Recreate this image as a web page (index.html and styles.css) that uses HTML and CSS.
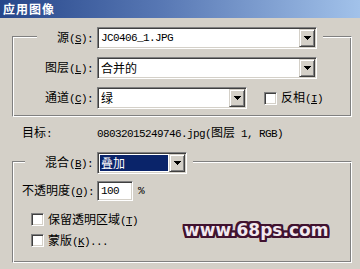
FILE: index.html
```html
<!DOCTYPE html>
<html lang="zh-CN">
<head>
<meta charset="utf-8">
<title>应用图像</title>
<link rel="stylesheet" href="styles.css">
</head>
<body>
<div class="title">应用图像</div>

<div class="group g1">
  <div class="row legend l1">
    <label class="lbl">源<span class="a">(<u>S</u>):</span></label>
    <div class="combo w220"><span class="val a">JC0406_1.JPG</span><span class="btn"><svg width="7" height="4" viewBox="0 0 7 4" shape-rendering="crispEdges"><path d="M0 0h7v1H0zM1 1h5v1H1zM2 2h3v1H2zM3 3h1v1H3z"/></svg></span></div>
  </div>
  <div class="row inrow">
    <label class="lbl">图层<span class="a">(<u>L</u>):</span></label>
    <div class="combo w220"><span class="val">合并的</span><span class="btn"><svg width="7" height="4" viewBox="0 0 7 4" shape-rendering="crispEdges"><path d="M0 0h7v1H0zM1 1h5v1H1zM2 2h3v1H2zM3 3h1v1H3z"/></svg></span></div>
  </div>
  <div class="row inrow">
    <label class="lbl">通道<span class="a">(<u>C</u>):</span></label>
    <div class="combo w150"><span class="val">绿</span><span class="btn"><svg width="7" height="4" viewBox="0 0 7 4" shape-rendering="crispEdges"><path d="M0 0h7v1H0zM1 1h5v1H1zM2 2h3v1H2zM3 3h1v1H3z"/></svg></span></div>
    <span class="check invert-check"></span>
    <span class="chk-label">反相<span class="a">(<u>I</u>)</span></span>
  </div>
</div>

<div class="target">
  <span class="tlbl">目标<span class="a">:</span></span>
  <span><span class="a">08032015249746.jpg(</span>图层<span class="a"> 1, RGB)</span></span>
</div>

<div class="group g2">
  <div class="row legend l2">
    <label class="lbl">混合<span class="a">(<u>B</u>):</span></label>
    <div class="combo w90"><span class="val sel">叠加</span><span class="btn"><svg width="7" height="4" viewBox="0 0 7 4" shape-rendering="crispEdges"><path d="M0 0h7v1H0zM1 1h5v1H1zM2 2h3v1H2zM3 3h1v1H3z"/></svg></span></div>
  </div>
  <div class="row opacity">
    <label class="lbl">不透明度<span class="a">(<u>O</u>):</span></label>
    <div class="input a">100</div>
    <span class="pct a">%</span>
  </div>
  <div class="row chk-row first">
    <span class="check"></span>
    <span class="chk-label">保留透明区域<span class="a">(<u>T</u>)</span></span>
  </div>
  <div class="row chk-row">
    <span class="check"></span>
    <span class="chk-label">蒙版<span class="a">(<u>K</u>)...</span></span>
  </div>
</div>

<div class="wm">www.68ps.com</div>
</body>
</html>
```

FILE: styles.css
```css
* { box-sizing: border-box; }
html, body { margin: 0; padding: 0; }
body {
  width: 360px;
  height: 269px;
  overflow: hidden;
  position: relative;
  background: #d4d0c8;
  color: #000;
  font-family: "Noto Sans CJK SC", sans-serif;
  font-size: 12px;
  line-height: 16px;
}
.a {
  font-family: "Liberation Mono", monospace;
  font-size: 11px;
  letter-spacing: -0.6px;
}
u { text-underline-offset: 1px; }

.title {
  height: 18px;
  line-height: 18px;
  padding-left: 3px;
  color: #fff;
  font-weight: bold;
  letter-spacing: 1px;
  background: linear-gradient(90deg, #26468a 0%, #5878b4 45%, #a2c2ea 100%);
}

.group {
  margin-left: 12px;
  width: 340px;
  border: 1px solid;
  border-color: #808080 #fff #fff #808080;
  box-shadow: inset 1px 1px #fff, inset -1px -1px #808080;
}
.g1 { margin-top: 18px; height: 81px; }
.g2 { margin-top: 20px; height: 102px; }

.row { display: flex; align-items: center; }
.legend { background: #d4d0c8; margin-top: -10px; height: 22px; }
.l1 { margin-left: 24px; width: 286px; }
.inrow { margin-left: 24px; margin-top: 8px; }
.lbl { flex: none; width: 56px; margin-right: 4px; text-align: right; white-space: nowrap; }

.combo {
  flex: none;
  display: flex;
  height: 22px;
  padding: 1px;
  background: #fff;
  border: 1px solid;
  border-color: #808080 #fff #fff #808080;
  box-shadow: inset 1px 1px #404040, inset -1px -1px #d4d0c8;
}
.w220 { width: 220px; }
.w150 { width: 150px; }
.w90 { width: 90px; }
.val {
  flex: 1;
  padding-left: 2px;
  line-height: 18px;
  white-space: nowrap;
  overflow: hidden;
}
.sel {
  margin: 1px;
  line-height: 16px;
  padding-left: 1px;
  background: #0a246a;
  color: #fff;
}
.btn {
  flex: none;
  width: 16px;
  height: 18px;
  display: flex;
  align-items: center;
  justify-content: center;
  background: #d4d0c8;
  border: 1px solid;
  border-color: #d4d0c8 #404040 #404040 #d4d0c8;
  box-shadow: inset 1px 1px #fff, inset -1px -1px #808080;
}
.btn svg { display: block; fill: #000; }

.check {
  flex: none;
  width: 13px;
  height: 13px;
  background: #fff;
  border: 1px solid;
  border-color: #808080 #fff #fff #808080;
  box-shadow: inset 1px 1px #404040, inset -1px -1px #d4d0c8;
}
.invert-check { margin-left: 17px; }
.chk-label { margin-left: 4px; white-space: nowrap; }

.target {
  display: flex;
  align-items: center;
  height: 16px;
  margin-top: 8px;
  padding-left: 22px;
  white-space: nowrap;
}
.tlbl { width: 75px; flex: none; }

.l2 { margin-left: 12px; width: 168px; }
.l2 .lbl { width: 68px; }

.opacity { margin-left: 9px; margin-top: 7px; }
.opacity .lbl { width: 71px; }
.input {
  width: 36px;
  height: 20px;
  padding-left: 3px;
  line-height: 18px;
  background: #fff;
  border: 1px solid;
  border-color: #808080 #fff #fff #808080;
  box-shadow: inset 1px 1px #404040, inset -1px -1px #d4d0c8;
}
.pct { margin-left: 5px; }

.chk-row { margin-left: 18px; margin-top: 8px; height: 13px; }
.chk-row.first { margin-top: 12px; }

.wm {
  position: absolute;
  left: 184px;
  top: 222px;
  font-family: "DejaVu Sans", sans-serif;
  font-weight: bold;
  font-size: 17px;
  line-height: 17px;
  color: #f1e8ee;
  text-shadow:
    2px 0 0 #40122f, -2px 0 0 #40122f, 0 2px 0 #40122f, 0 -2px 0 #40122f,
    2px 2px 0 #40122f, -2px -2px 0 #40122f, 2px -2px 0 #40122f, -2px 2px 0 #40122f,
    1px 2px 0 #40122f, 2px 1px 0 #40122f, -1px 2px 0 #40122f, -2px 1px 0 #40122f,
    1px -2px 0 #40122f, 2px -1px 0 #40122f, -1px -2px 0 #40122f, -2px -1px 0 #40122f;
}
```
